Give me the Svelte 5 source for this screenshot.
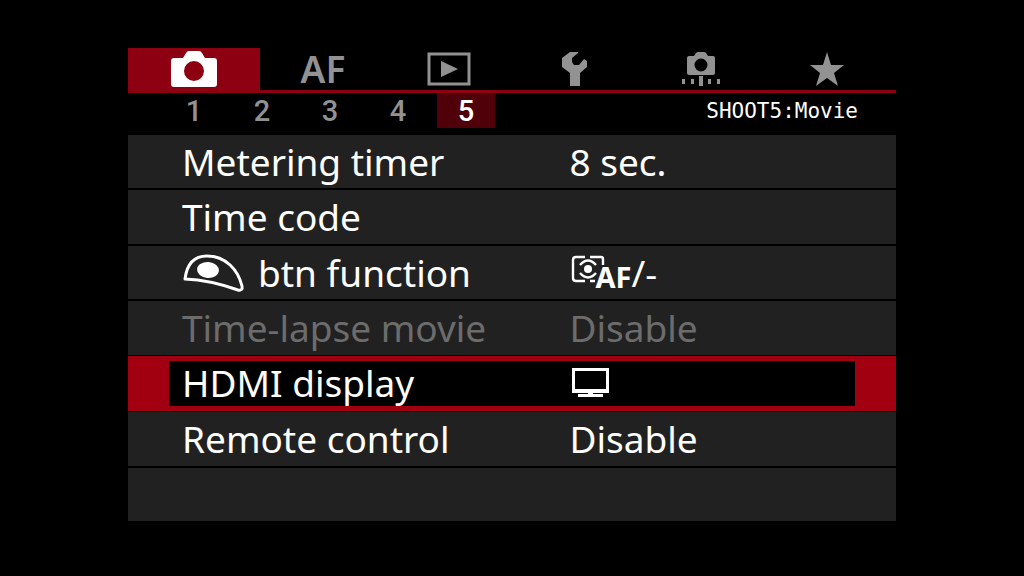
<script>
  const tabs = [
    { id: 'shoot', name: 'Shooting' },
    { id: 'af', name: 'Autofocus' },
    { id: 'play', name: 'Playback' },
    { id: 'setup', name: 'Set-up' },
    { id: 'custom', name: 'Custom functions' },
    { id: 'mymenu', name: 'My Menu' }
  ]

  const pages = [1, 2, 3, 4, 5]

  const items = [
    { label: 'Metering timer', value: '8 sec.' },
    { label: 'Time code', value: '' },
    { label: 'btn function', value: '/-', icon: 'button', valueIcon: 'af-frame' },
    { label: 'Time-lapse movie', value: 'Disable', disabled: true },
    { label: 'HDMI display', value: '', valueIcon: 'monitor' },
    { label: 'Remote control', value: 'Disable' }
  ]

  let activeTab = $state('shoot')
  let activePage = $state(5)
  let selected = $state(4)
</script>

<main class="screen">
  <div class="menu">
    <nav class="tabs">
      {#each tabs as tab}
        <button
          class="tab"
          class:tab--active={activeTab === tab.id}
          aria-label={tab.name}
          onclick={() => (activeTab = tab.id)}
        >
          {#if tab.id === 'shoot'}
            <svg width="48" height="38" viewBox="0 0 48 38">
              <path
                fill="currentColor"
                fill-rule="evenodd"
                d="M4 8h9l3-5q1-2 3-2h10q2 0 3 2l3 5h9q3 0 3 3v23q0 3-3 3H4q-3 0-3-3V11q0-3 3-3zM24 11a10 10 0 1 0 0 20a10 10 0 1 0 0-20z"
              />
            </svg>
          {:else if tab.id === 'af'}
            AF
          {:else if tab.id === 'play'}
            <svg width="44" height="34" viewBox="0 0 44 34">
              <rect x="2" y="2" width="40" height="30" fill="none" stroke="currentColor" stroke-width="3" />
              <path fill="currentColor" d="M14 9l17 8-17 8z" />
            </svg>
          {:else if tab.id === 'setup'}
            <svg width="28" height="36" viewBox="0 0 28 36">
              <path
                fill="currentColor"
                d="M9 1h8v1l-6 5v4l2 3h5l5-6 3 2v6l-7 6v13H9V22l-8-6V7z"
              />
            </svg>
          {:else if tab.id === 'custom'}
            <svg width="38" height="36" viewBox="0 0 38 36">
              <path
                fill="currentColor"
                fill-rule="evenodd"
                d="M7 5h5l2-3q1-1 2-1h6q1 0 2 1l2 3h5q2 0 2 2v15q0 2-2 2H7q-2 0-2-2V7q0-2 2-2zM19 7.500a6.500 6.500 0 1 0 0 13a6.500 6.500 0 1 0 0-13z"
              />
              <path fill="currentColor" d="M0 28h3v5H0zM9 28h3v5H9zM17 25h4v10h-4zM26 28h3v5h-3zM35 28h3v5h-3z" />
            </svg>
          {:else}
            <svg width="36" height="36" viewBox="0 0 36 36">
              <path fill="currentColor" d="M18 1l4 13h13L25 22l4 13-11-8-11 8 4-13L1 14h13z" />
            </svg>
          {/if}
        </button>
      {/each}
    </nav>

    <div class="pages">
      {#each pages as page}
        <button
          class="page"
          class:page--active={activePage === page}
          onclick={() => (activePage = page)}
        >{page}</button>
      {/each}
      <span class="pages__title">SHOOT{activePage}:Movie</span>
    </div>

    <ul class="list">
      {#each items as item, i}
        <li class="list__row">
          <button
            class="item"
            class:item--selected={selected === i}
            disabled={item.disabled}
            onclick={() => (selected = i)}
          >
            <span class="item__label">
              {#if item.icon === 'button'}
                <svg width="64" height="40" viewBox="0 0 64 40" aria-hidden="true">
                  <path
                    fill="none"
                    stroke="currentColor"
                    stroke-width="3"
                    stroke-linejoin="round"
                    d="M3 26C5 10 13 3 25 3C44 3 56 17 60 33Q61 38 56 37Q28 27 3 26z"
                  />
                  <ellipse cx="26" cy="17" rx="11" ry="8" fill="currentColor" transform="rotate(5 26 17)" />
                </svg>
              {/if}
              {item.label}
            </span>
            <span class="item__value">
              {#if item.valueIcon === 'af-frame'}
                <span class="af-frame">
                  <svg width="36" height="28" viewBox="0 0 36 28" aria-hidden="true">
                    <path
                      fill="none"
                      stroke="currentColor"
                      stroke-width="2.400"
                      d="M16 2H7Q4 2 4 5V23Q4 26 7 26H16M21 2H32Q34 2 34 4V10M21 26H26M11 10Q19 1 27 10M11 18Q19 27 27 18"
                    />
                    <circle cx="19" cy="14" r="4" fill="currentColor" />
                  </svg>
                  <span class="af-frame__text">AF</span>
                </span>
              {:else if item.valueIcon === 'monitor'}
                <svg width="40" height="32" viewBox="0 0 40 32" role="img" aria-label="Monitor">
                  <path
                    fill="currentColor"
                    fill-rule="evenodd"
                    d="M3 1h37v25H24v1h10v3H9v-3h10v-1H3zM6 4v18h31V4z"
                  />
                </svg>
              {/if}
              {item.value}
            </span>
          </button>
        </li>
      {/each}
      <li class="list__row list__row--empty"></li>
    </ul>
  </div>
</main>

<style>
  :global(body) {
    background: #000;
  }

  .screen {
    --row: #212121;
    --red: #a00010;
    --grey: #929292;
    display: flex;
    justify-content: center;
    box-sizing: border-box;
    min-height: 100vh;
    padding: 48px 0 55px;
    font-family: 'Noto Sans', sans-serif;
    color: #fff;
  }

  button {
    margin: 0;
    padding: 0;
    border: 0;
    background: none;
    font: inherit;
    color: inherit;
  }

  svg {
    display: block;
    flex-shrink: 0;
  }

  .menu {
    display: flex;
    flex-direction: column;
    width: 75%;
  }

  .tabs {
    display: grid;
    grid-template-columns: 132fr repeat(5, 126fr);
    height: 42px;
    padding-right: 6px;
    border-bottom: 3px solid #8c0012;
  }

  .tab {
    display: flex;
    align-items: center;
    justify-content: center;
    font-size: 37px;
    font-weight: 600;
    line-height: 40px;
    color: var(--grey);
  }

  .tab--active {
    background: #8c0012;
    color: #fff;
  }

  .pages {
    display: flex;
    gap: 10px;
    height: 42px;
    padding: 0 38px 0 37px;
  }

  .page {
    width: 58px;
    height: 35px;
    font-family: Roboto, sans-serif;
    font-size: 29px;
    font-weight: 500;
    line-height: 37px;
    color: var(--grey);
  }

  .page--active {
    background: #4f0008;
    color: #fff;
  }

  .pages__title {
    margin-left: auto;
    font-family: 'DejaVu Sans Mono', monospace;
    font-size: 21px;
    line-height: 37px;
  }

  .list {
    flex: 1;
    display: grid;
    grid-auto-rows: 1fr;
    gap: 2px;
    margin: 0;
    padding: 0;
    list-style: none;
  }

  .list__row {
    display: flex;
  }

  .list__row--empty {
    background: var(--row);
  }

  .item {
    flex: 1;
    display: grid;
    grid-template-columns: 388fr 286fr;
    align-items: center;
    padding-left: 13px;
    border: 4px solid var(--row);
    border-width: 4px 41px;
    background: var(--row);
    font-size: 37px;
    line-height: 44px;
    text-align: left;
  }

  .item:disabled {
    color: #6c6c6c;
  }

  .item--selected {
    margin: -1px 0;
    border-color: var(--red);
    border-width: 5px 41px;
    background: #000;
  }

  .item__label {
    display: flex;
    align-items: center;
    gap: 12px;
    white-space: nowrap;
  }

  .item__value {
    display: flex;
    align-items: center;
  }

  .af-frame {
    display: flex;
  }

  .af-frame__text {
    margin: 8px 0 0 -10px;
    font-size: 29px;
    font-weight: 700;
    line-height: 28px;
  }
</style>
